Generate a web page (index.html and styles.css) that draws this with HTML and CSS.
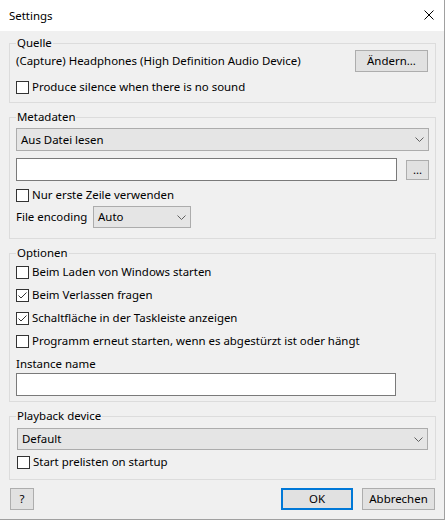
FILE: index.html
```html
<!DOCTYPE html>
<html>
<head>
<meta charset="utf-8">
<link rel="stylesheet" href="styles.css">
</head>
<body>
<div class="window">
  <div class="titlebar">
    <span class="title">Settings</span>
    <svg class="close" width="10" height="10" viewBox="0 0 10 10"><path d="M0.5 0.5 L9.5 9.5 M9.5 0.5 L0.5 9.5" stroke="#000" stroke-width="1" fill="none"/></svg>
  </div>
  <div class="content">
    <fieldset class="group g-quelle">
      <legend>Quelle</legend>
      <div class="device-row">
        <span class="device">(Capture) Headphones (High Definition Audio Device)</span>
        <button class="btn btn-change">Ändern...</button>
      </div>
      <label class="check mt7"><span class="box"></span><span>Produce silence when there is no sound</span></label>
    </fieldset>

    <fieldset class="group g-meta">
      <legend>Metadaten</legend>
      <div class="combo combo-wide mt4"><span>Aus Datei lesen</span><svg class="chev" width="9" height="5" viewBox="0 0 9 5"><path d="M0.5 0.5 L4.5 4.5 L8.5 0.5" stroke="#606060" fill="none"/></svg></div>
      <div class="file-row mt7">
        <input class="textbox file-input" type="text">
        <button class="btn btn-dots">...</button>
      </div>
      <label class="check mt6"><span class="box"></span><span>Nur erste Zeile verwenden</span></label>
      <div class="enc-row mt3">
        <span class="enc-label">File encoding</span>
        <div class="combo combo-enc"><span>Auto</span><svg class="chev" width="9" height="5" viewBox="0 0 9 5"><path d="M0.5 0.5 L4.5 4.5 L8.5 0.5" stroke="#606060" fill="none"/></svg></div>
      </div>
    </fieldset>

    <fieldset class="group g-opt">
      <legend>Optionen</legend>
      <label class="check mt4"><span class="box"></span><span>Beim Laden von Windows starten</span></label>
      <label class="check mt7"><span class="box"><svg width="11" height="11" viewBox="0 0 11 11"><path d="M1.5 5.5 L4 8 L9.5 2.5" stroke="#333" stroke-width="1" fill="none"/></svg></span><span>Beim Verlassen fragen</span></label>
      <label class="check mt7"><span class="box"><svg width="11" height="11" viewBox="0 0 11 11"><path d="M1.5 5.5 L4 8 L9.5 2.5" stroke="#333" stroke-width="1" fill="none"/></svg></span><span>Schaltfläche in der Taskleiste anzeigen</span></label>
      <label class="check mt7"><span class="box"></span><span>Programm erneut starten, wenn es abgestürzt ist oder hängt</span></label>
      <div class="field-label">Instance name</div>
      <input class="textbox inst-input" type="text">
    </fieldset>

    <fieldset class="group g-play">
      <legend>Playback device</legend>
      <div class="combo combo-play mt5"><span>Default</span><svg class="chev" width="9" height="5" viewBox="0 0 9 5"><path d="M0.5 0.5 L4.5 4.5 L8.5 0.5" stroke="#606060" fill="none"/></svg></div>
      <label class="check mt4 shift1"><span class="box"></span><span>Start prelisten on startup</span></label>
    </fieldset>
  </div>
  <div class="footer">
    <button class="btn btn-help">?</button>
    <div class="spacer"></div>
    <button class="btn btn-ok">OK</button>
    <button class="btn btn-cancel">Abbrechen</button>
  </div>
</div>
</body>
</html>
```
FILE: styles.css
```css
* { box-sizing: border-box; }
html, body { margin: 0; padding: 0; }
body {
  font-family: "Noto Sans", "Liberation Sans", sans-serif;
  font-size: 11.45px;
  color: #000;
  background: #f0f0f0;
}
.window {
  width: 445px;
  height: 520px;
  background: #f0f0f0;
  border-right: 1px solid #a0a0a0;
  border-bottom: 1px solid #a0a0a0;
  display: flex;
  flex-direction: column;
}
.titlebar {
  height: 31px;
  background: #fff;
  display: flex;
  align-items: center;
  padding-left: 9px;
  position: relative;
}
.title { line-height: 16px; }
.close { position: absolute; left: 424px; top: 10px; }
.content {
  padding: 5px 8px 0 9px;
  display: flex;
  flex-direction: column;
  gap: 7px;
}
.group {
  margin: 0;
  border: 1px solid #dcdcdc;
  padding: 0 6px;
  min-width: 0;
}
.group legend {
  padding: 0 1px;
  line-height: 14px;
  font-size: 11.45px;
}
.g-quelle { padding-bottom: 7px; }
.g-meta { padding-bottom: 10px; }
.g-opt { padding-bottom: 5px; }
.g-play { padding-bottom: 9px; }
.mt3 { margin-top: 3px; }
.mt4 { margin-top: 4px; }
.mt5 { margin-top: 5px; }
.mt6 { margin-top: 6px; }
.mt7 { margin-top: 7px; }
.device-row {
  display: flex;
  align-items: center;
  justify-content: space-between;
  height: 22px;
}
.device { line-height: 16px; }
.btn {
  font-family: inherit;
  font-size: 11.45px;
  color: #000;
  background: #e1e1e1;
  border: 1px solid #adadad;
  padding: 0;
  height: 22px;
  line-height: 18px;
  border-radius: 0;
}
.btn-change { width: 73px; margin-right: 1px; }
.check {
  display: flex;
  align-items: center;
  height: 16px;
  gap: 3px;
  line-height: 16px;
}
.shift1 { margin-left: 1px; }
.box {
  width: 13px;
  height: 13px;
  border: 1px solid #333;
  background: #fff;
  display: flex;
  flex: none;
}
.combo {
  height: 23px;
  background: #e5e5e5;
  border: 1px solid #acacac;
  display: flex;
  align-items: center;
  justify-content: space-between;
  padding: 0 4px 0 4px;
  line-height: 16px;
}
.combo-wide { width: 413px; }
.combo-play { width: 411px; height: 22px; margin-left: 1px; }
.combo-enc { width: 98px; height: 22px; }
.chev { flex: none; }
.file-row {
  display: flex;
  align-items: center;
  justify-content: space-between;
  width: 413px;
}
.textbox {
  appearance: none;
  height: 23px;
  border: 1px solid #7a7a7a;
  background: #fff;
  margin: 0;
  padding: 0 3px;
  font-family: inherit;
  font-size: 11.45px;
  border-radius: 0;
  outline: none;
}
.file-input { width: 381px; }
.btn-dots { width: 23px; height: 20px; line-height: 14px; }
.enc-row {
  display: flex;
  align-items: center;
}
.enc-label { line-height: 16px; width: 77px; white-space: nowrap; }
.field-label { margin-top: 7px; line-height: 16px; }
.inst-input { width: 380px; margin-top: 1px; display: block; }
.footer {
  display: flex;
  align-items: center;
  padding: 0 9px 0 10px;
  margin-top: 8px;
}
.spacer { flex: 1; }
.btn-help { width: 24px; }
.btn-ok { width: 72px; border: 2px solid #0078d7; margin-right: 9px; }
.btn-cancel { width: 73px; }
```
